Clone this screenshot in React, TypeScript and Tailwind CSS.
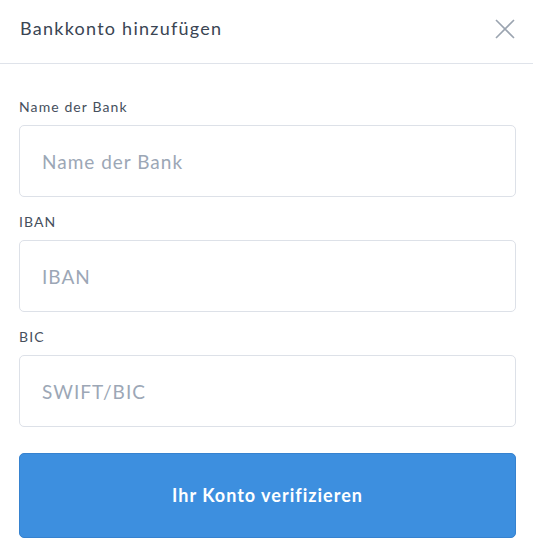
export default function App() {
  const fields = [
    { label: 'Name der Bank', placeholder: 'Name der Bank' },
    { label: 'IBAN', placeholder: 'IBAN' },
    { label: 'BIC', placeholder: 'SWIFT/BIC' },
  ];

  return (
    <div className="bg-white min-h-screen w-[533px] font-['Lato',sans-serif]">
      <header className="h-[64px] flex items-center justify-between pl-[20px] pr-[18px] border-b border-[#dfe3ea] pb-[6px]">
        <h1 className="text-[18px] text-[#3a4553] tracking-[1.25px]">Bankkonto hinzufügen</h1>
        <button className="text-[#9ba4b0]">
          <svg width="20" height="20" viewBox="0 0 20 20" fill="none" stroke="currentColor" strokeWidth="1.6">
            <path d="M1 1L19 19M19 1L1 19" />
          </svg>
        </button>
      </header>
      <form className="pl-[19px] pr-[17px] pt-[33px] flex flex-col">
        {fields.map((f, i) => (
          <label key={f.label} className={`flex flex-col ${i > 0 ? 'mt-[15px]' : ''}`}>
            <span className="h-5 leading-5 text-[14px] text-[#46505d] mb-2 tracking-[1.1px]">{f.label}</span>
            <input
              placeholder={f.placeholder}
              className="h-[72px] w-full rounded-[5px] border border-[#dde1e8] px-[22px] text-[19px] tracking-[1px] text-[#3a4553] placeholder:text-[#9ca7b6] outline-none"
            />
          </label>
        ))}
        <button
          type="button"
          className="mt-[26px] h-[85px] w-full rounded-[5px] bg-[#3d8fdf] border border-[#3682cf] text-white font-bold text-[18px] tracking-[1px]"
        >
          Ihr Konto verifizieren
        </button>
      </form>
    </div>
  );
}
